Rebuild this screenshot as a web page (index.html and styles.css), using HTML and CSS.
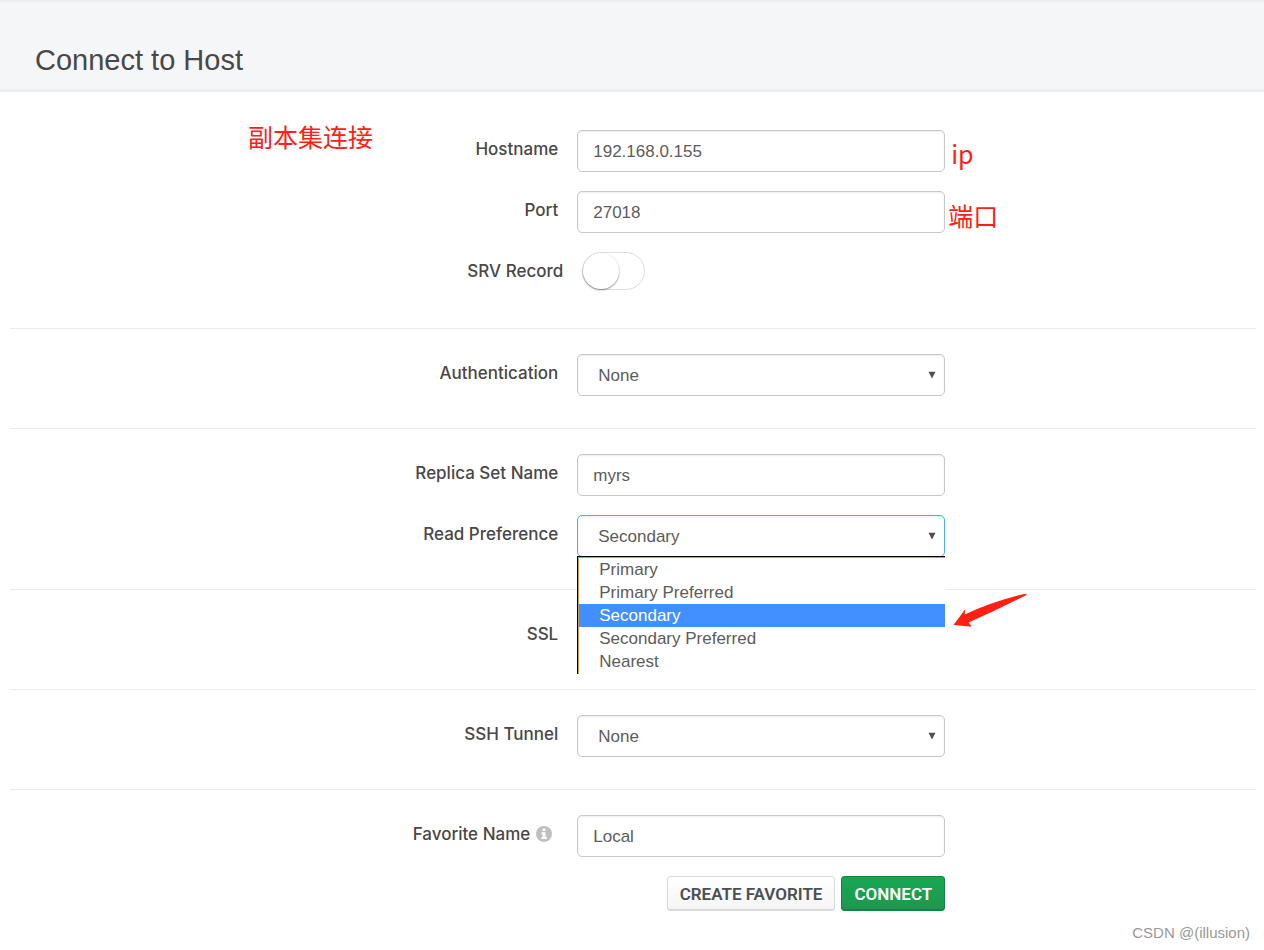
FILE: index.html
```html
<!DOCTYPE html>
<html lang="en">
<head>
<meta charset="utf-8">
<title>Connect to Host</title>
<link rel="stylesheet" href="styles.css">
</head>
<body>
<header class="page-header">
  <h1 class="page-title">Connect to Host</h1>
</header>
<main>
  <form class="connect-form">
    <p class="note note-heading" lang="zh">副本集连接</p>
    <section class="group group-first">
      <div class="row">
        <label class="label" for="hostname">Hostname</label>
        <div class="field">
          <input class="control" id="hostname" type="text" value="192.168.0.155">
          <span class="note note-ip">ip</span>
        </div>
      </div>
      <div class="row">
        <label class="label" for="port">Port</label>
        <div class="field">
          <input class="control" id="port" type="text" value="27018">
          <span class="note note-port" lang="zh">端口</span>
        </div>
      </div>
      <div class="row row-switch">
        <label class="label" for="srv">SRV Record</label>
        <input class="switch" id="srv" type="checkbox" role="switch">
      </div>
    </section>
    <section class="group">
      <div class="row">
        <label class="label" for="auth">Authentication</label>
        <div class="field">
          <select class="control select" id="auth"><option>None</option></select>
          <svg class="caret" viewBox="0 0 8 8" aria-hidden="true"><path d="M0.500 0.800H7.500L4 7.500Z"/></svg>
        </div>
      </div>
    </section>
    <section class="group">
      <div class="row">
        <label class="label" for="replica">Replica Set Name</label>
        <div class="field"><input class="control" id="replica" type="text" value="myrs"></div>
      </div>
      <div class="row">
        <label class="label" for="readpref">Read Preference</label>
        <div class="field">
          <select class="control select select-open" id="readpref"><option>Secondary</option></select>
          <svg class="caret" viewBox="0 0 8 8" aria-hidden="true"><path d="M0.500 0.800H7.500L4 7.500Z"/></svg>
          <ul class="options" role="listbox" aria-label="Read Preference">
            <li class="option" role="option">Primary</li>
            <li class="option" role="option">Primary Preferred</li>
            <li class="option option-active" role="option" aria-selected="true">Secondary</li>
            <li class="option" role="option">Secondary Preferred</li>
            <li class="option" role="option">Nearest</li>
          </ul>
          <svg class="arrow" viewBox="0 0 76 36" aria-hidden="true"><path d="M0.500 32 12.200 16.200 11.700 21.500Q42 7.500 72.500 0.800Q74.500 0.800 73 2.300Q46 16 15.700 29.500L18.800 33.800Z"/></svg>
        </div>
      </div>
    </section>
    <section class="group">
      <div class="row">
        <label class="label" for="ssl">SSL</label>
        <div class="field"><select class="control select" id="ssl"></select></div>
      </div>
    </section>
    <section class="group">
      <div class="row">
        <label class="label" for="ssh">SSH Tunnel</label>
        <div class="field">
          <select class="control select" id="ssh"><option>None</option></select>
          <svg class="caret" viewBox="0 0 8 8" aria-hidden="true"><path d="M0.500 0.800H7.500L4 7.500Z"/></svg>
        </div>
      </div>
    </section>
    <section class="group group-last">
      <div class="row">
        <label class="label label-info" for="favorite">Favorite Name
          <svg class="info" viewBox="0 0 16 16" aria-hidden="true"><circle cx="8" cy="8" r="8"/><path d="M6.500 2.500H9.500V5H6.500ZM5.500 6.300H9.500V11H10.800V13H5.300V11H6.600V8.200H5.500Z"/></svg>
        </label>
        <div class="field"><input class="control" id="favorite" type="text" value="Local"></div>
      </div>
      <div class="row">
        <div class="actions">
          <button class="btn" type="button">CREATE FAVORITE</button>
          <button class="btn btn-primary" type="submit">CONNECT</button>
        </div>
      </div>
    </section>
  </form>
</main>
<footer class="credit">CSDN @(illusion)</footer>
</body>
</html>
```
FILE: styles.css
```css
* {
  box-sizing: border-box;
}

body {
  margin: 0;
  background: #fff;
  color: #494747;
  font: 17px "Liberation Sans", Arial, "Noto Sans CJK SC", sans-serif;
}

.page-header {
  padding: 38px 35px 9px;
  background: #f5f6f7;
  border-top: 2px solid #ebeef0;
  border-bottom: 3px solid #ebedee;
}

.page-title {
  margin: 0;
  font-size: 29px;
  font-weight: 400;
  line-height: 40px;
}

.connect-form {
  position: relative;
  padding: 0 8px 0 10px;
}

.group {
  display: grid;
  gap: 19px;
  padding: 25px 0 32px;
  border-bottom: 1px solid #ebebeb;
}

.group-first {
  padding: 38px 0;
}

.group-last {
  padding-bottom: 0;
  border-bottom: 0;
}

.row {
  display: grid;
  grid-template-columns: 44% minmax(0, 368px);
  column-gap: 19px;
}

.row-switch {
  grid-template-columns: calc(44% + 5px) 63px;
}

.label {
  font-family: Inter, "Liberation Sans", sans-serif;
  font-size: 17px;
  font-weight: 500;
  line-height: 38px;
  text-align: right;
}

.label-info {
  display: flex;
  align-items: center;
  justify-content: flex-end;
  gap: 6px;
  padding-right: 6px;
  height: 38px;
}

.info {
  width: 16px;
  height: 16px;
}

.info circle {
  fill: #bfbfbe;
}

.info path {
  fill: #fff;
}

.field {
  position: relative;
}

.control {
  display: block;
  width: 100%;
  height: 42px;
  padding: 2px 15px 0;
  appearance: none;
  background: #fff;
  border: 1px solid #c7c7c7;
  border-radius: 5px;
  box-shadow: inset 0 1px 2px rgba(0, 0, 0, 0.08);
  color: #5c5c5c;
  font: inherit;
}

.select {
  padding: 1px 20px 0;
}

.select-open {
  border-color: #43b1f0;
}

.caret {
  position: absolute;
  top: 17px;
  right: 9px;
  width: 8px;
  height: 8px;
  fill: #505050;
  pointer-events: none;
}

.options {
  position: absolute;
  z-index: 2;
  top: 41px;
  left: 0;
  right: 0;
  margin: 0;
  padding: 1px 0 1px 1px;
  list-style: none;
  background: #fff;
  border-top: 1px solid #000;
  border-left: 1px solid #000;
  box-shadow: inset 1px 1px #c79a50;
}

.option {
  padding-left: 20px;
  color: #5c5c5c;
  line-height: 23px;
}

.option-active {
  background: #428fff;
  color: #fff;
}

.arrow {
  position: absolute;
  top: 78px;
  left: calc(100% + 8px);
  width: 76px;
  height: 36px;
  fill: #ff2014;
}

.note {
  position: absolute;
  margin: 0;
  color: #ff2014;
  font-family: "Noto Sans CJK SC", sans-serif;
  font-size: 25px;
  font-weight: 400;
  line-height: 36px;
  white-space: nowrap;
}

.note-heading {
  top: 26px;
  left: 248px;
}

.note-ip {
  top: 5px;
  left: calc(100% + 6px);
}

.note-port {
  top: 6px;
  left: calc(100% + 3px);
}

.switch {
  position: relative;
  width: 63px;
  height: 38px;
  margin: 0;
  appearance: none;
  background: #fff;
  border: 1px solid #dedede;
  border-radius: 19px;
}

.switch::before {
  content: "";
  position: absolute;
  top: 0;
  left: 0;
  width: 36px;
  height: 36px;
  background: #fff;
  border-radius: 50%;
  box-shadow: 0 1px 2px rgba(0, 0, 0, 0.45);
}

.switch:checked::before {
  left: 25px;
}

.actions {
  display: flex;
  grid-column: 2;
  justify-content: flex-end;
  gap: 6px;
}

.btn {
  height: 35px;
  padding: 1px 12px 0;
  background: linear-gradient(#fff, #f5f5f5);
  border: 1px solid #d9d9d9;
  border-radius: 3px;
  box-shadow: inset 0 -1px #d9d9d9;
  color: #494f52;
  font: 600 17px Roboto, sans-serif;
  white-space: nowrap;
}

.btn-primary {
  background: linear-gradient(#17a750, #1d9850);
  border-color: #158243;
  box-shadow: inset 0 -1px #158243;
  color: #fff;
}

.credit {
  padding: 12px 14px 7px;
  color: #999;
  font-size: 15px;
  line-height: 20px;
  text-align: right;
}
```
